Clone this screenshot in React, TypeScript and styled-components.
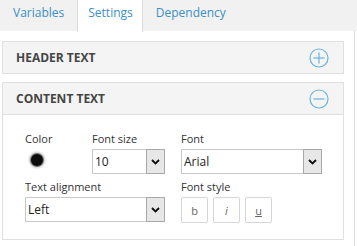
import styled, { createGlobalStyle } from "styled-components";

const GlobalStyle = createGlobalStyle`
    body {
        margin: 0;
        background: #fff;
        font-family: "Open Sans", "Liberation Sans", sans-serif;
        color: #333;
    }
`;

const Page = styled.div`
    width: 357px;
    height: 246px;
    overflow: hidden;
`;

const TabBar = styled.div`
    height: 31px;
    background: #f1f1f1;
    display: flex;
    align-items: flex-start;
`;

const Tab = styled.div<{ $active?: boolean }>`
    display: flex;
    align-items: flex-start;
    padding: 4px ${(p) => (p.$active ? "9px" : "13px")} 0 ${(p) => (p.$active ? "10px" : "13px")};
    font-size: 12px;
    color: #3b8fc8;
    background: ${(p) => (p.$active ? "#fff" : "transparent")};
    border-left: ${(p) => (p.$active ? "1px solid #dcdcdc" : "none")};
    border-right: ${(p) => (p.$active ? "1px solid #dcdcdc" : "none")};
    height: ${(p) => (p.$active ? "32px" : "31px")};
    box-sizing: border-box;
`;

const Body = styled.div`
    width: 355px;
    height: 215px;
    box-sizing: border-box;
    border-right: 1px solid #dadada;
    padding: 10px 10px 0 2px;
    display: flex;
    flex-direction: column;
    gap: 8px;
`;

const Panel = styled.div`
    border: 1px solid #e0e0e0;
    background: #fff;
`;

const PanelHeader = styled.div`
    height: 31px;
    background: #f4f4f4;
    display: flex;
    align-items: center;
    justify-content: space-between;
    padding: 0 14px 0 13px;
`;

const PanelTitle = styled.span`
    font-size: 12px;
    font-weight: 700;
    color: #454545;
`;

const PanelBody = styled.div`
    border-top: 1px solid #e0e0e0;
    padding: 17px 0 16px 22px;
    display: flex;
    flex-direction: column;
    gap: 6px;
`;

const Row = styled.div`
    display: flex;
`;

const Field = styled.div<{ $w: number; $gap?: number }>`
    width: ${(p) => p.$w}px;
    margin-left: ${(p) => p.$gap ?? 0}px;
    display: flex;
    flex-direction: column;
    gap: 3px;
`;

const Label = styled.span`
    font-size: 11px;
    line-height: 14px;
    color: #333;
`;

const Swatch = styled.span`
    margin: 5px 0 0 6px;
    width: 12px;
    height: 12px;
    border-radius: 50%;
    background: #0c0c0c;
    box-shadow: 0 0 0 1px #777, 0 0 2px 2px #c8c8c8;
`;

const SelectBox = styled.div`
    height: 25px;
    display: flex;
    box-sizing: border-box;
`;

const SelectValue = styled.div`
    flex: 1;
    border: 1px solid #c8c8c8;
    border-right: none;
    display: flex;
    align-items: center;
    padding-left: 2px;
    font-size: 12px;
    color: #222;
`;

const SelectArrow = styled.div`
    width: 17px;
    border: 1px solid #a8a8a8;
    background: #e7e7e7;
    display: flex;
    align-items: center;
    justify-content: center;
`;

const StyleButtons = styled.div`
    display: flex;
    gap: 5px;
`;

const StyleButton = styled.button<{ $variant?: "italic" | "underline" }>`
    width: 27px;
    height: 26px;
    border: 1px solid #d6d6d6;
    border-radius: 2px;
    background: #fff;
    font-family: "Open Sans", "Liberation Sans", sans-serif;
    font-size: 11px;
    color: #666;
    padding: 0;
    display: flex;
    align-items: center;
    justify-content: center;
    font-style: ${(p) => (p.$variant === "italic" ? "italic" : "normal")};
    text-decoration: ${(p) => (p.$variant === "underline" ? "underline" : "none")};
`;

function Chevron() {
    return (
        <svg width="9" height="6" viewBox="0 0 9 6">
            <path d="M1 1 L4.5 4.5 L8 1" fill="none" stroke="#111" strokeWidth="1.9" />
        </svg>
    );
}

function ToggleIcon({ open }: { open: boolean }) {
    return (
        <svg width="20" height="20" viewBox="0 0 20 20">
            <circle cx="10" cy="10" r="9" fill="none" stroke="#6ab3df" strokeWidth="1.2" />
            <line x1="4.5" y1="10" x2="15.5" y2="10" stroke="#6ab3df" strokeWidth="1.2" />
            {!open && <line x1="10" y1="4.5" x2="10" y2="15.5" stroke="#6ab3df" strokeWidth="1.2" />}
        </svg>
    );
}

function Select({ value }: { value: string }) {
    return (
        <SelectBox>
            <SelectValue>{value}</SelectValue>
            <SelectArrow>
                <Chevron />
            </SelectArrow>
        </SelectBox>
    );
}

export default function App() {
    return (
        <Page>
            <GlobalStyle />
            <TabBar>
                <Tab>Variables</Tab>
                <Tab $active>Settings</Tab>
                <Tab>Dependency</Tab>
            </TabBar>
            <Body>
                <Panel>
                    <PanelHeader>
                        <PanelTitle>HEADER TEXT</PanelTitle>
                        <ToggleIcon open={false} />
                    </PanelHeader>
                </Panel>
                <Panel>
                    <PanelHeader>
                        <PanelTitle>CONTENT TEXT</PanelTitle>
                        <ToggleIcon open />
                    </PanelHeader>
                    <PanelBody>
                        <Row>
                            <Field $w={67}>
                                <Label>Color</Label>
                                <Swatch />
                            </Field>
                            <Field $w={73}>
                                <Label>Font size</Label>
                                <Select value="10" />
                            </Field>
                            <Field $w={141} $gap={16}>
                                <Label>Font</Label>
                                <Select value="Arial" />
                            </Field>
                        </Row>
                        <Row>
                            <Field $w={140}>
                                <Label>Text alignment</Label>
                                <Select value="Left" />
                            </Field>
                            <Field $w={141} $gap={16}>
                                <Label>Font style</Label>
                                <StyleButtons>
                                    <StyleButton>b</StyleButton>
                                    <StyleButton $variant="italic">i</StyleButton>
                                    <StyleButton $variant="underline">u</StyleButton>
                                </StyleButtons>
                            </Field>
                        </Row>
                    </PanelBody>
                </Panel>
            </Body>
        </Page>
    );
}
